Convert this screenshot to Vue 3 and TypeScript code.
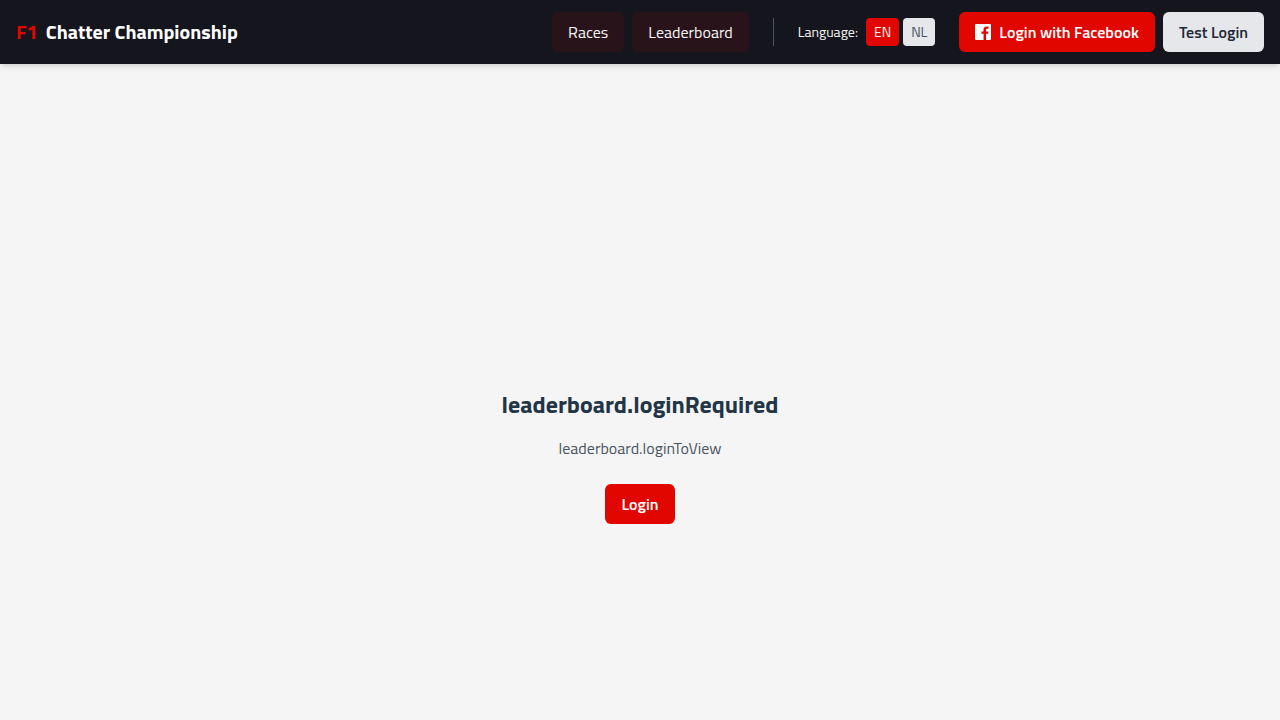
<script setup lang="ts">
import { ref } from 'vue'

type Locale = 'en' | 'nl'

const locale = ref<Locale>('en')
const locales: { code: Locale; label: string }[] = [
  { code: 'en', label: 'EN' },
  { code: 'nl', label: 'NL' },
]
const links = [
  { label: 'Races', href: '#races' },
  { label: 'Leaderboard', href: '#leaderboard' },
]
</script>

<template>
  <div class="page">
    <header class="header">
      <a class="brand" href="#home">
        <span class="brand-mark">F1</span>
        <span>Chatter Championship</span>
      </a>
      <div class="actions">
        <nav class="nav">
          <a v-for="link in links" :key="link.href" :href="link.href" class="nav-link">{{ link.label }}</a>
        </nav>
        <div class="language" role="group" aria-labelledby="language-label">
          <span id="language-label" class="language-label">Language:</span>
          <div class="locales">
            <button
              v-for="item in locales"
              :key="item.code"
              type="button"
              :class="['locale', { active: locale === item.code }]"
              :aria-pressed="locale === item.code"
              @click="locale = item.code"
            >{{ item.label }}</button>
          </div>
        </div>
        <div class="auth">
          <button type="button" class="button primary">
            <svg class="icon" viewBox="0 0 24 24" fill="currentColor" aria-hidden="true">
              <path d="M22.675 0h-21.35c-.732 0-1.325.593-1.325 1.325v21.351c0 .731.593 1.324 1.325 1.324h11.495v-9.294h-3.128v-3.622h3.128v-2.671c0-3.1 1.893-4.788 4.659-4.788 1.325 0 2.463.099 2.795.143v3.24l-1.918.001c-1.504 0-1.795.715-1.795 1.763v2.313h3.587l-.467 3.622h-3.12v9.293h6.116c.73 0 1.323-.593 1.323-1.325v-21.35c0-.732-.593-1.325-1.325-1.325z" />
            </svg>
            <span>Login with Facebook</span>
          </button>
          <button type="button" class="button secondary">Test Login</button>
        </div>
      </div>
    </header>
    <main class="main">
      <h1 class="title">leaderboard.loginRequired</h1>
      <p class="message">leaderboard.loginToView</p>
      <button type="button" class="button primary">Login</button>
    </main>
  </div>
</template>

<style>
body {
  margin: 0;
  background: #f5f5f5;
}
</style>

<style scoped>
.page {
  display: flex;
  flex-direction: column;
  min-height: 100vh;
  background: #f5f5f5;
  color: #213547;
  font-family: "Titillium Web", Roboto, "Liberation Sans", sans-serif;
  font-size: 16px;
  line-height: 24px;
}
.header {
  display: flex;
  align-items: center;
  justify-content: space-between;
  padding: 12px 16px;
  background: #15151e;
  color: #fff;
  box-shadow: 0 4px 6px -1px rgba(0, 0, 0, 0.1), 0 2px 4px -2px rgba(0, 0, 0, 0.1);
}
.brand {
  display: flex;
  gap: 8px;
  color: #fff;
  font-size: 20px;
  line-height: 28px;
  font-weight: 700;
  text-decoration: none;
}
.brand-mark {
  color: #e10600;
}
.actions {
  display: flex;
  align-items: center;
  gap: 24px;
}
.nav,
.auth {
  display: flex;
  gap: 8px;
}
.nav-link {
  padding: 8px 16px;
  border-radius: 6px;
  background: rgba(225, 6, 0, 0.1);
  color: #f5f5f5;
  text-decoration: none;
}
.language {
  display: flex;
  align-items: center;
  gap: 8px;
  padding-left: 24px;
  border-left: 1px solid #4b5563;
  font-size: 14px;
  line-height: 20px;
}
.language-label {
  color: #f5f5f5;
}
.locales {
  display: flex;
  gap: 4px;
}
.locale {
  padding: 4px 8px;
  border: 0;
  border-radius: 4px;
  background: #e5e7eb;
  color: #4b5563;
  font: inherit;
  cursor: pointer;
}
.locale.active {
  background: #e10600;
  color: #f5f5f5;
}
.button {
  display: flex;
  align-items: center;
  justify-content: center;
  gap: 8px;
  padding: 8px 16px;
  border: 0;
  border-radius: 6px;
  font: inherit;
  font-weight: 600;
  cursor: pointer;
}
.primary {
  background: #e10600;
  color: #fff;
}
.secondary {
  background: #e5e7eb;
  color: #1f2937;
}
.icon {
  flex: none;
  width: 16px;
  height: 16px;
}
.main {
  display: flex;
  flex: 1;
  flex-direction: column;
  align-items: center;
  justify-content: center;
  padding: 128px 16px 0;
  text-align: center;
}
.title {
  margin: 0 0 16px;
  font-size: 24px;
  line-height: 32px;
  font-weight: 700;
}
.message {
  margin: 0 0 24px;
  color: #4b5563;
}
</style>
